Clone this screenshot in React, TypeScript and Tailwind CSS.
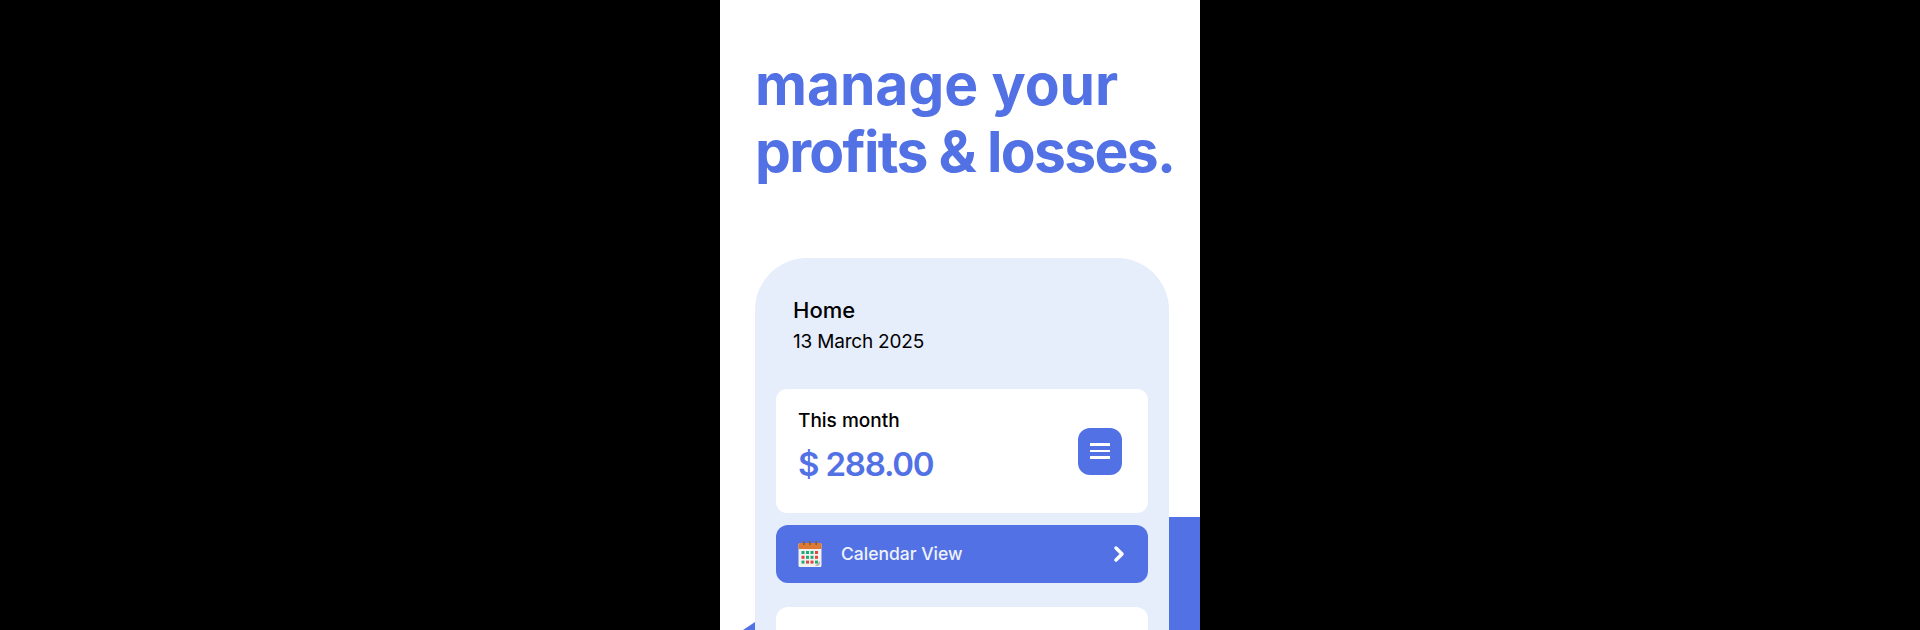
import React from 'react';
import { ChevronRight } from 'lucide-react';

const CalendarIcon: React.FC = () => {
  const dots = ['#1fa97a', '#1fa97a', '#1fa97a', '#e0453f', '#e0453f', '#1fa97a', '#1fa97a', '#e0453f', '#1fa97a', '#e0453f', '#e0453f', '#1fa97a'];
  return (
    <svg width="24" height="26" viewBox="0 0 24 26" className="shrink-0">
      <rect x="0.5" y="2" width="23" height="24" rx="1.5" fill="#f3f1ee" />
      <path d="M0.5 8V3.5A1.5 1.5 0 0 1 2 2h20a1.5 1.5 0 0 1 1.5 1.5V8z" fill="#dd7a35" />
      <rect x="5" y="0" width="1.6" height="4" fill="#8a5a3a" />
      <rect x="11.2" y="0" width="1.6" height="4" fill="#8a5a3a" />
      <rect x="17.4" y="0" width="1.6" height="4" fill="#8a5a3a" />
      {dots.map((color, i) => (
        <rect key={i} x={3.5 + (i % 4) * 4.5} y={10 + Math.floor(i / 4) * 4.8} width="3" height="3" fill={color} />
      ))}
      <path d="M17 25l5-5v3l-2 2z" fill="#b9b6b0" />
    </svg>
  );
};

export default function App() {
  return (
    <div className="h-[630px] w-full bg-black flex justify-center overflow-hidden font-['Inter',sans-serif]">
      <div className="relative w-[480px] h-[630px] bg-white overflow-hidden">
        {/* decorative shapes behind the phone */}
        <div className="absolute left-[449px] top-[517px] w-[31px] h-[113px] bg-[#5271e4]" />
        <svg className="absolute left-[23px] top-[622px]" width="12" height="8" viewBox="0 0 12 8">
          <path d="M0 8L12 0v8z" fill="#5271e4" />
        </svg>

        <div className="relative flex flex-col pt-[51px] pl-[35px]">
          <h1 className="text-[57px] leading-[67px] font-[650] text-[#5271e4] whitespace-nowrap">
            <span className="block tracking-[-0.1px]">manage your</span>
            <span className="block tracking-[-1.7px]">profits &amp; losses.</span>
          </h1>

          <div className="mt-[73px] w-[414px] h-[400px] rounded-t-[52px] bg-[#e6edfb] px-[21px]">
            <div className="pt-[38px] pl-[17px] text-black">
              <div className="text-[22px] leading-[28px] font-medium">Home</div>
              <div className="mt-[4px] text-[19px] leading-[28px] tracking-[-0.2px]">13 March 2025</div>
            </div>

            <div className="mt-[33px] h-[124px] rounded-[11px] bg-white flex items-center justify-between pl-[22px] pr-[26px]">
              <div className="-mt-[8px]">
                <div className="text-[19px] leading-[26px] font-medium text-black">This month</div>
                <div className="mt-[8px] text-[33px] leading-[44px] font-semibold tracking-[-1.2px] text-[#5271e4]">$ 288.00</div>
              </div>
              <div className="w-[44px] h-[47px] rounded-[12px] bg-[#5271e4] flex flex-col items-center justify-center gap-[4px]">
                <span className="block w-[20px] h-[2.5px] bg-white" />
                <span className="block w-[20px] h-[2.5px] bg-white" />
                <span className="block w-[20px] h-[2.5px] bg-white" />
              </div>
            </div>

            <div className="mt-[12px] h-[58px] rounded-[12px] bg-[#5271e4] flex items-center pl-[22px] pr-[17px]">
              <CalendarIcon />
              <span className="ml-[19px] text-[17.5px] font-medium text-[#eef2fd]">Calendar View</span>
              <ChevronRight className="ml-auto text-white" size={24} strokeWidth={3.5} />
            </div>

            <div className="mt-[24px] h-[60px] rounded-t-[12px] bg-white" />
          </div>
        </div>
      </div>
    </div>
  );
}
